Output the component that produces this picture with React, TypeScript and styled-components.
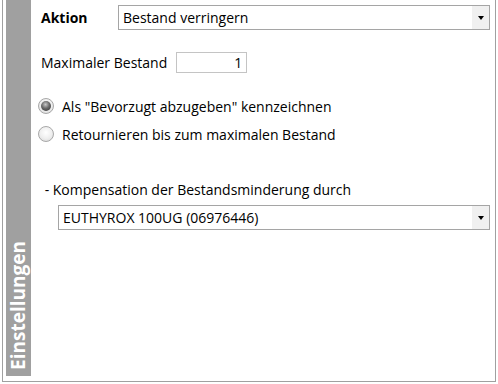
import React from "react";
import styled, { createGlobalStyle } from "styled-components";

const Global = createGlobalStyle`
  html, body { margin: 0; padding: 0; background: #ffffff; }
  body { font-family: "Open Sans", "Noto Sans", sans-serif; color: #000; }
`;

const Page = styled.div`
  width: 498px;
  height: 384px;
  padding-left: 2px;
  box-sizing: border-box;
  background: #fff;
`;

const Frame = styled.div`
  width: 494px;
  height: 382px;
  box-sizing: border-box;
  border: 1px solid #a0a0a0;
  border-top: none;
  padding: 0 0 5px 3px;
  display: flex;
`;

const Sidebar = styled.div`
  width: 25px;
  background: #a0a0a0;
  display: flex;
  align-items: flex-end;
  justify-content: center;
  padding-bottom: 6px;
  box-sizing: border-box;
`;

const SideTitle = styled.span`
  writing-mode: vertical-rl;
  transform: rotate(180deg);
  color: #fff;
  font-weight: 700;
  font-size: 19px;
  line-height: 25px;
`;

const Content = styled.div`
  flex: 1;
  display: flex;
  flex-direction: column;
  padding: 5px 5px 0 10px;
  font-size: 14px;
`;

const Row = styled.div<{ $mt?: number; $h?: number }>`
  display: flex;
  align-items: center;
  margin-top: ${(p) => p.$mt ?? 0}px;
  height: ${(p) => p.$h ?? 20}px;
`;

const Label = styled.span<{ $bold?: boolean; $w?: number }>`
  font-weight: ${(p) => (p.$bold ? 700 : 400)};
  width: ${(p) => (p.$w ? `${p.$w}px` : "auto")};
  flex: none;
  white-space: nowrap;
`;

const Combo = styled.div<{ $ml?: number }>`
  flex: 1;
  height: 25px;
  box-sizing: border-box;
  border: 1px solid #a5a5a5;
  margin-left: ${(p) => p.$ml ?? 0}px;
  display: flex;
  align-items: stretch;
  background: #fff;
`;

const ComboText = styled.span`
  flex: 1;
  padding-left: 4px;
  display: flex;
  align-items: center;
  white-space: nowrap;
`;

const ComboButton = styled.span`
  width: 17px;
  background: #f0f0f0;
  display: flex;
  align-items: center;
  justify-content: center;
  &::after {
    content: "";
    border-left: 3.5px solid transparent;
    border-right: 3.5px solid transparent;
    border-top: 4px solid #000;
  }
`;

const NumberBox = styled.div`
  width: 71px;
  height: 21px;
  box-sizing: border-box;
  border: 1px solid #c4c4c4;
  margin-left: 9px;
  text-align: right;
  padding-right: 4px;
  line-height: 19px;
`;

const Radio = styled.span<{ $checked?: boolean }>`
  width: 16px;
  height: 16px;
  box-sizing: border-box;
  border-radius: 50%;
  border: 1px solid #a8a8a8;
  background: radial-gradient(circle at 50% 40%, #ffffff 0%, #eeeeee 55%, #d4d4d4 100%);
  margin-left: -3px;
  margin-right: 8px;
  display: flex;
  align-items: center;
  justify-content: center;
  flex: none;
  &::after {
    content: "";
    display: ${(p) => (p.$checked ? "block" : "none")};
    width: 10px;
    height: 10px;
    border-radius: 50%;
    background: radial-gradient(circle at 45% 35%, #c8c8c8 0%, #6a6a6a 45%, #2a2a2a 100%);
  }
`;

export default function App() {
  return (
    <>
      <Global />
      <Page>
        <Frame>
          <Sidebar>
            <SideTitle>Einstellungen</SideTitle>
          </Sidebar>
          <Content>
            <Row $h={25}>
              <Label $bold $w={77}>Aktion</Label>
              <Combo>
                <ComboText>Bestand verringern</ComboText>
                <ComboButton />
              </Combo>
            </Row>
            <Row $mt={22} $h={21}>
              <Label>Maximaler Bestand</Label>
              <NumberBox>1</NumberBox>
            </Row>
            <Row $mt={23}>
              <Radio $checked />
              <Label>Als "Bevorzugt abzugeben" kennzeichnen</Label>
            </Row>
            <Row $mt={8}>
              <Radio />
              <Label>Retournieren bis zum maximalen Bestand</Label>
            </Row>
            <Row $mt={35}>
              <Label>&nbsp;- Kompensation der Bestandsminderung durch</Label>
            </Row>
            <Row $mt={6} $h={25}>
              <Combo $ml={17}>
                <ComboText>EUTHYROX 100UG (06976446)</ComboText>
                <ComboButton />
              </Combo>
            </Row>
          </Content>
        </Frame>
      </Page>
    </>
  );
}
